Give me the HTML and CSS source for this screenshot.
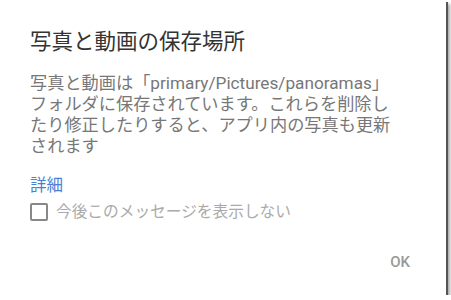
FILE: index.html
```html
<!DOCTYPE html>
<html lang="ja">
<head>
    <meta charset="UTF-8">
    <meta name="viewport" content="width=device-width, initial-scale=1.0">
    <title>写真と動画の保存場所</title>
    <link rel="stylesheet" href="styles.css">
</head>
<body>

    <div class="dialog">
        <h2 class="dialog-title">写真と動画の保存場所</h2>

        <p class="dialog-text">写真と動画は「primary/Pictures/panoramas」フォルダに保存されています。これらを削除したり修正したりすると、アプリ内の写真も更新されます</p>

        <a class="more-link" href="#">詳細</a>

        <label class="dont-show">
            <span class="box"></span>
            <span>今後このメッセージを表示しない</span>
        </label>

        <div class="actions">
            <button class="ok-btn">OK</button>
        </div>
    </div>

</body>
</html>
```

FILE: styles.css
```css
body {
    margin: 0;
    background-color: #fff;
    font-family: Roboto, "Noto Sans CJK JP", sans-serif;
}

.dialog {
    width: 446px;
    height: 295px;
    box-sizing: border-box;
    padding: 28px 0 0 30px;
    background-color: #fff;
    box-shadow: 2px 2px 0 #555, 4px 4px 3px rgba(0, 0, 0, 0.35);
}

.dialog-title {
    margin: 0;
    font-size: 21.5px;
    font-weight: normal;
    line-height: 28px;
    color: #333;
}

.dialog-text {
    width: 372px;
    margin: 17px 0 0;
    font-size: 17.2px;
    line-height: 21px;
    color: #777;
}

.more-link {
    display: block;
    margin-top: 18px;
    font-size: 16.5px;
    line-height: 22px;
    color: #4a7fd6;
    text-decoration: none;
}

.dont-show {
    display: flex;
    align-items: center;
    gap: 8px;
    margin-top: 4px;
    font-size: 15.7px;
    line-height: 22px;
    color: #aaa;
}

.box {
    width: 14px;
    height: 14px;
    border: 2px solid #888;
    border-radius: 2px;
}

.actions {
    display: flex;
    justify-content: flex-end;
    padding: 30px 36px 0 0;
}

.ok-btn {
    padding: 0;
    border: none;
    background: none;
    font-family: Roboto, sans-serif;
    font-size: 15px;
    font-weight: 500;
    color: #999;
    cursor: pointer;
}
```
